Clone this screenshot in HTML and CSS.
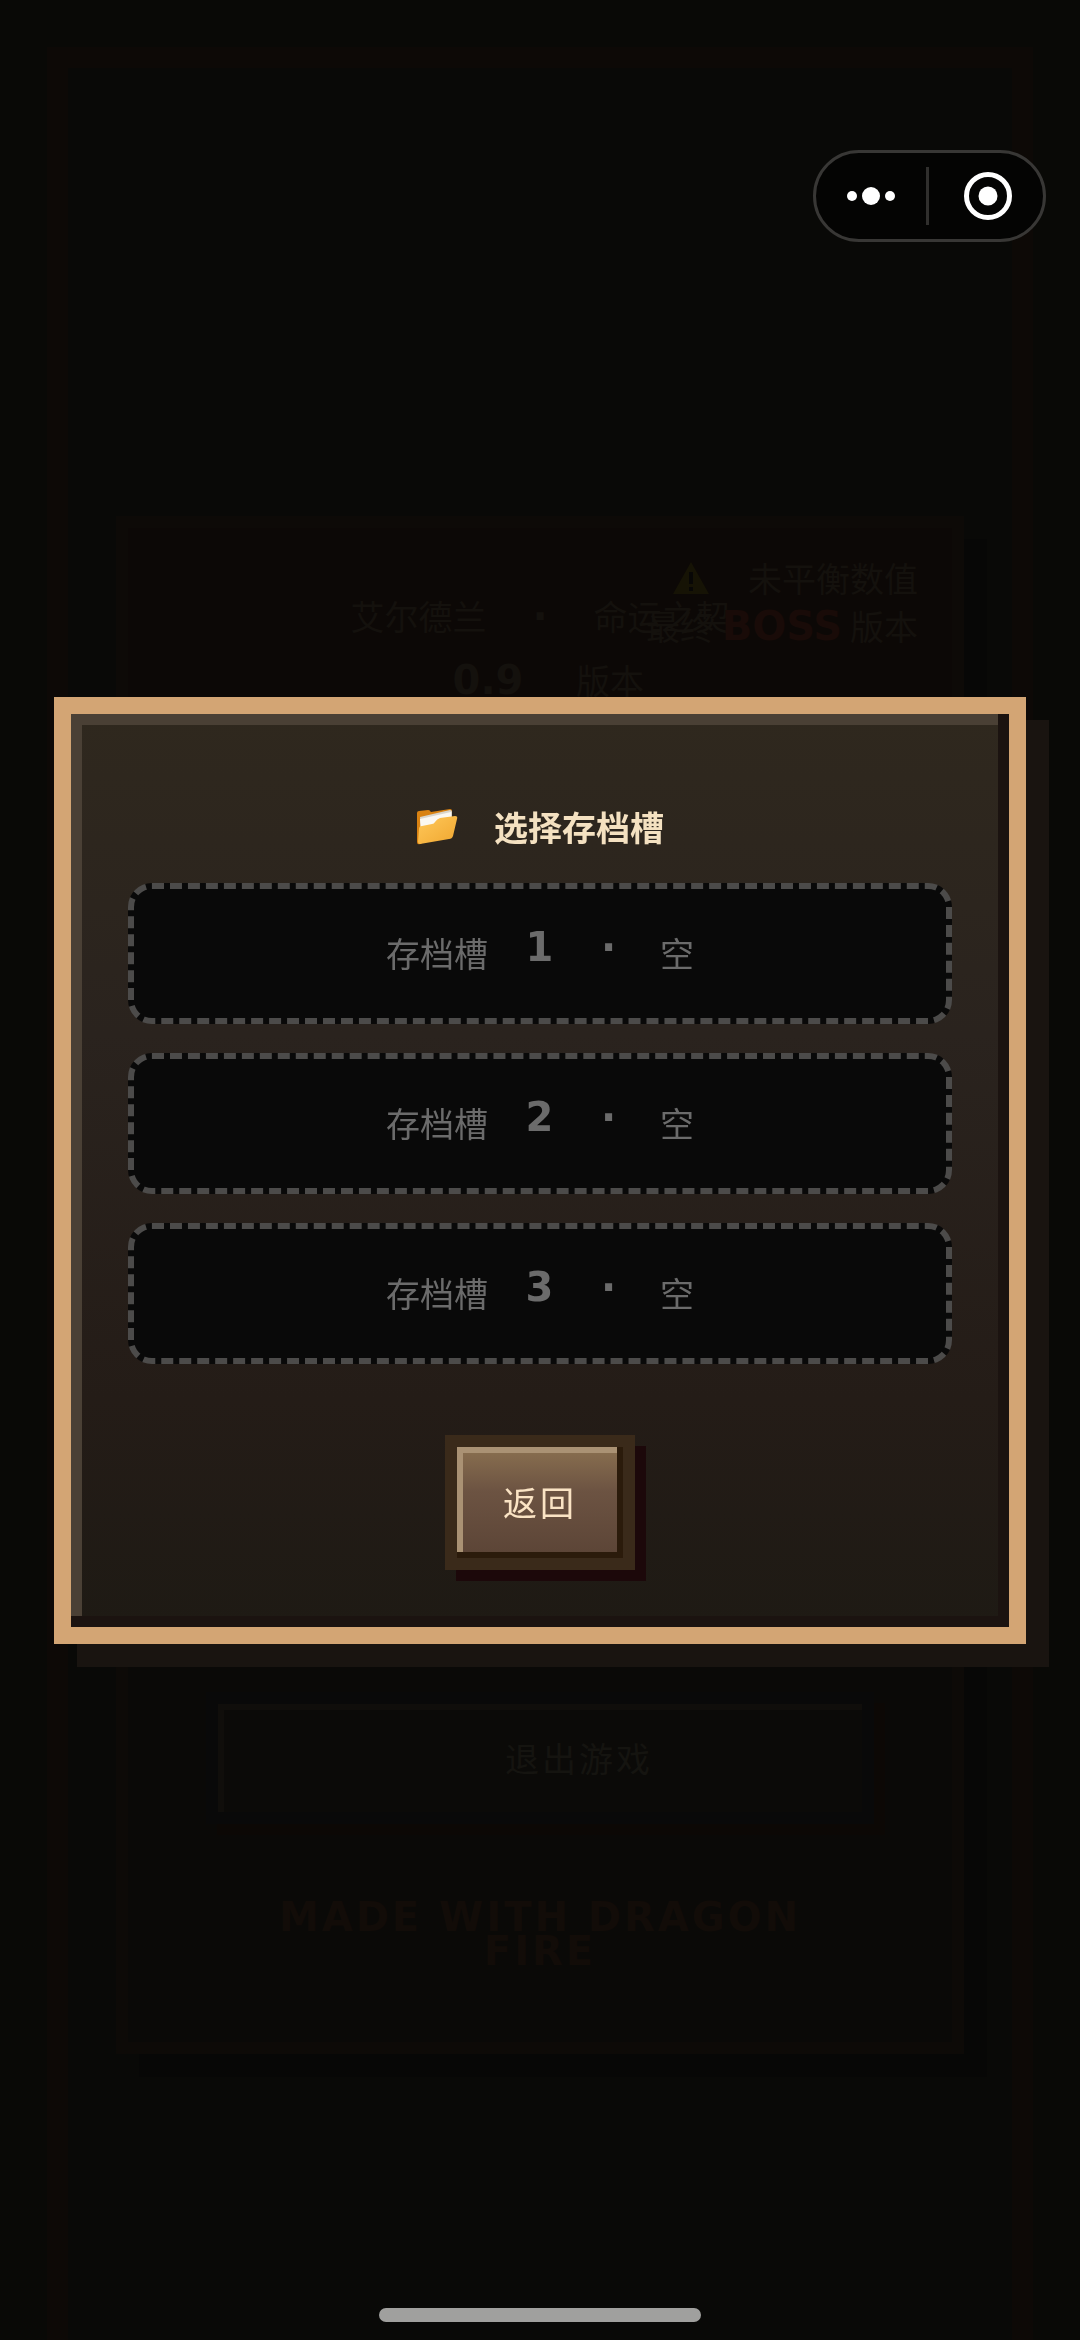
FILE: index.html
```html
<!DOCTYPE html>
<html lang="zh-CN">

<head>
    <meta charset="UTF-8">
    <meta name="viewport" content="width=device-width, initial-scale=1.0">
    <title>艾尔德兰 · 命运之契</title>
    <link rel="stylesheet" href="styles.css">
</head>

<body>
    <!-- Main menu, dimmed behind the dialog -->
    <div class="game-frame">
        <div class="menu-card">
            <div class="menu-top">
                <h1 class="game-title">
                    <span>艾尔德兰</span>
                    <span class="pixel">·</span>
                    <span>命运之契</span>
                </h1>
                <p class="game-version"><span class="pixel version-number">0.9</span><span>版本</span></p>
                <div class="notice">
                    <p class="notice-line">
                        <svg class="warn-icon" viewBox="0 0 38 34" aria-hidden="true">
                            <path d="M19 1 L37 33 H1 Z" fill="#161305" />
                            <path d="M19 11 V23 M19 26 V30" stroke="#080706" stroke-width="4" />
                        </svg>
                        <span>未平衡数值</span>
                    </p>
                    <p>最终<span class="pixel boss">BOSS</span>版本</p>
                </div>
            </div>
            <div class="menu-bottom">
                <button class="menu-button" type="button">退出游戏</button>
                <p class="credit pixel">MADE WITH DRAGON FIRE</p>
            </div>
        </div>
    </div>

    <div class="overlay">
        <div class="modal" role="dialog" aria-labelledby="slotTitle">
            <h2 class="modal-title" id="slotTitle">
                <svg class="folder-icon" viewBox="0 0 42 36" aria-hidden="true">
                    <defs>
                        <linearGradient id="folderFront" x1="0" y1="0" x2="1" y2="1">
                            <stop offset="0" stop-color="#ffc85a" />
                            <stop offset="1" stop-color="#f0a730" />
                        </linearGradient>
                    </defs>
                    <path d="M1 4 Q1 2 3 2 L12 1 Q14 1 14 2 L15 3 L34 0 Q36 0 36 2 L36 20 L4 35 Q1 36 1 33 Z" fill="#d98212" />
                    <path d="M4 8 L34 1 Q36 1 36 3 L36 14 L5 24 Z" fill="#d9d5cc" />
                    <path d="M4 10 L35 3 V14 L5 22 Z" fill="#fbf8f2" />
                    <path d="M3 20 Q3 17 6 17 L16 15 Q18 15 19 13 Q21 10 24 9 L39 7 Q42 7 41 10 L37 27 Q36 30 33 30 L4 35 Q2 35 2 33 Z" fill="url(#folderFront)" />
                </svg>
                <span>选择存档槽</span>
            </h2>

            <div class="slot-list">
                <button class="slot" type="button">
                    <span>存档槽</span><span class="pixel num">1</span><span class="pixel num">·</span><span>空</span>
                </button>
                <button class="slot" type="button">
                    <span>存档槽</span><span class="pixel num">2</span><span class="pixel num">·</span><span>空</span>
                </button>
                <button class="slot" type="button">
                    <span>存档槽</span><span class="pixel num">3</span><span class="pixel num">·</span><span>空</span>
                </button>
            </div>

            <button class="back-button" type="button">返回</button>
        </div>
    </div>

    <!-- Mini program capsule -->
    <div class="capsule">
        <button class="capsule-button" type="button" aria-label="更多">
            <svg width="50" height="50" viewBox="0 0 50 50" fill="#fff">
                <circle cx="6" cy="25" r="5" />
                <circle cx="25" cy="25" r="9" />
                <circle cx="44" cy="25" r="5" />
            </svg>
        </button>
        <button class="capsule-button" type="button" aria-label="关闭">
            <svg width="50" height="50" viewBox="0 0 50 50">
                <circle cx="25" cy="25" r="21.5" fill="none" stroke="#fff" stroke-width="5" />
                <circle cx="25" cy="25" r="9.5" fill="#fff" />
            </svg>
        </button>
    </div>

    <div class="home-bar"></div>
</body>

</html>
```

FILE: styles.css
```css
* {
    box-sizing: border-box;
    margin: 0;
    padding: 0;
}

body {
    min-height: 100vh;
    background: #090906;
    color: #14110d;
    font-family: "Noto Sans CJK SC", sans-serif;
    font-size: 34px;
    line-height: 48px;
    overflow: hidden;
}

button {
    font-family: inherit;
    font-size: inherit;
    line-height: inherit;
    cursor: pointer;
}

.pixel {
    font-family: "DejaVu Sans", "Noto Sans CJK SC", sans-serif;
    font-weight: bold;
    font-size: 40px;
}

/* Main menu */
.game-frame {
    height: 100vh;
    margin: 47px 47px 0;
    padding: 448px 48px 0;
    border: 21px solid #0d0906;
    border-bottom: none;
    background: #090907;
}

.menu-card {
    display: flex;
    flex-direction: column;
    justify-content: space-between;
    height: 1538px;
    border: 12px solid #0d0a07;
    background: linear-gradient(#0c0806, #0c0806 20%, #0a0907 60%);
    box-shadow: 23px 23px 0 #070706;
}

.menu-top {
    position: relative;
    padding-top: 64px;
}

.game-title {
    display: flex;
    justify-content: center;
    gap: 46px;
    font-size: 34px;
    font-weight: normal;
}

.game-version {
    display: flex;
    justify-content: center;
    gap: 36px;
    margin-top: 16px;
}

.version-number {
    width: 104px;
    text-align: center;
}

.notice {
    position: absolute;
    top: 26px;
    right: 34px;
    text-align: right;
}

.notice-line {
    display: flex;
    align-items: center;
    justify-content: flex-end;
    gap: 38px;
}

.warn-icon {
    width: 38px;
    height: 34px;
}

.boss {
    display: inline-block;
    width: 136px;
    color: #190b08;
    text-align: center;
}

.menu-bottom {
    display: flex;
    flex-direction: column;
    align-items: center;
    padding: 0 78px 74px;
}

.menu-button {
    width: 100%;
    height: 132px;
    padding-left: 78px;
    border: 12px solid #090909;
    background: #0b0a08;
    box-shadow: inset 6px 6px 0 #100e0b, 11px 11px 0 #0c0805;
    color: #151410;
    letter-spacing: 3px;
}

.credit {
    max-width: 600px;
    margin-top: 76px;
    color: #120c08;
    line-height: 34px;
    letter-spacing: 3px;
    text-align: center;
}

/* Save slot dialog */
.overlay {
    position: fixed;
    inset: 0;
    display: flex;
    align-items: center;
    justify-content: center;
    padding: 54px;
}

.modal {
    display: flex;
    flex-direction: column;
    align-items: center;
    width: 100%;
    padding: 57px;
    border: 17px solid #d3a574;
    background: linear-gradient(#2f281e, #2a231e 35%, #241c17 75%, #1e1a14);
    box-shadow: inset -11px -11px 0 #1b1310, inset 11px 11px 0 #4a4035, 23px 23px 0 #191410;
}

.modal-title {
    display: flex;
    align-items: center;
    justify-content: center;
    gap: 36px;
    margin: 32px 0;
    color: #f4e1c1;
    font-size: 34px;
    font-weight: bold;
}

.folder-icon {
    width: 42px;
    height: 36px;
}

.slot-list {
    display: flex;
    flex-direction: column;
    gap: 29px;
    width: 100%;
}

.slot {
    display: flex;
    align-items: center;
    justify-content: center;
    gap: 34px;
    height: 141px;
    border: 6px dashed #4c4b4a;
    border-radius: 24px;
    background: #090909;
    color: #6b6b6b;
}

.num {
    width: 35px;
    padding-bottom: 12px;
    text-align: center;
}

.back-button {
    height: 135px;
    margin-top: 71px;
    padding: 0 46px;
    border: 12px solid #3a2a1a;
    background: linear-gradient(#8a7050, #6c5342 40%, #5b4436) padding-box;
    box-shadow: inset -6px -6px 0 #2b1b0b, inset 6px 6px 0 #aa9274, 11px 11px 0 #1c080a;
    color: #fae3c4;
    letter-spacing: 3px;
}

/* System controls */
.capsule {
    position: fixed;
    top: 150px;
    right: 34px;
    display: flex;
    align-items: center;
    width: 233px;
    height: 92px;
    border: 3px solid #383735;
    border-radius: 46px;
    background: #040403;
}

.capsule-button {
    display: flex;
    flex: 1;
    align-items: center;
    justify-content: center;
    height: 58px;
    border: none;
    background: none;
}

.capsule-button + .capsule-button {
    padding-left: 4px;
    border-left: 3px solid #302f2d;
}

.home-bar {
    position: fixed;
    bottom: 18px;
    left: 50%;
    width: 322px;
    height: 14px;
    border-radius: 7px;
    background: #a0a09e;
    transform: translateX(-50%);
}
```
